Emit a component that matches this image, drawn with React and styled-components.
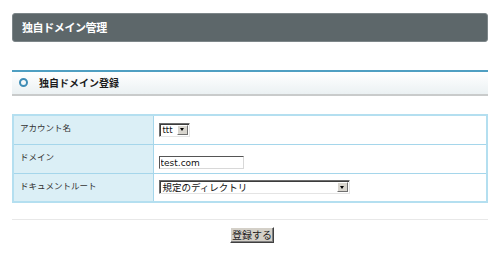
import React from 'react'
import styled, { createGlobalStyle } from 'styled-components'

const GlobalStyle = createGlobalStyle`
    body {
        margin: 0;
        background: #fff;
        font-family: "Noto Sans CJK JP", "DejaVu Sans", sans-serif;
    }
`

const Page = styled.main`
    box-sizing: border-box;
    width: 500px;
    padding: 13px 12px 0 12px;
    display: flex;
    flex-direction: column;
`

const TitleBar = styled.h1`
    box-sizing: border-box;
    margin: 0;
    height: 29px;
    display: flex;
    align-items: center;
    padding: 0 0 1px 9px;
    background: #5d676a;
    border: 1px solid #7d8689;
    border-radius: 3px;
    color: #fff;
    font-size: 11px;
    font-weight: bold;
    letter-spacing: -0.4px;
`

const SectionHead = styled.h2`
    box-sizing: border-box;
    margin: 28px 0 0 0;
    height: 26px;
    display: flex;
    align-items: center;
    gap: 11px;
    padding: 0 0 1px 7px;
    background: linear-gradient(#ffffff, #ebf1f3);
    border-top: 2px solid #4f9fc2;
    border-bottom: 2px solid #c9cbcb;
    color: #1c1c1c;
    font-size: 10px;
    font-weight: bold;
`

const Ring = styled.span`
    box-sizing: border-box;
    width: 9px;
    height: 9px;
    border-radius: 50%;
    border: 2px solid #3f8db6;
`

const FormTable = styled.table`
    margin-top: 18px;
    width: 100%;
    border-collapse: collapse;
    border: 2px solid #b4dff0;
`

const Row = styled.tr`
    height: 29px;
`

const Label = styled.th`
    box-sizing: border-box;
    width: 140px;
    padding: 0 0 5px 6px;
    text-align: left;
    font-weight: normal;
    font-size: 8.5px;
    color: #333;
    background: #dbeff6;
    border: 1px solid #a5d6eb;
`

const Cell = styled.td`
    padding: 0 0 0 5px;
    border: 1px solid #a5d6eb;
    background: #fff;
`

const SelectBox = styled.div`
    box-sizing: border-box;
    width: ${p => p.w}px;
    height: ${p => p.h}px;
    display: flex;
    align-items: stretch;
    background: #fff;
    border-top: 1px solid #6e6e6e;
    border-left: 1px solid #6e6e6e;
    border-right: 1px solid #e4e4e4;
    border-bottom: 1px solid #e4e4e4;
    box-shadow: inset 1px 1px 0 #3c3c3c;
`

const SelectText = styled.span`
    flex: 1;
    display: flex;
    align-items: center;
    padding-left: ${p => p.pad}px;
    font-size: ${p => p.size}px;
    font-family: ${p => p.jp ? '"Noto Sans CJK JP", sans-serif' : '"DejaVu Sans", sans-serif'};
    color: #111;
    white-space: nowrap;
    overflow: hidden;
`

const ArrowBtn = styled.span`
    box-sizing: border-box;
    width: 11px;
    margin: 1px 1px 1px 0;
    display: flex;
    align-items: center;
    justify-content: center;
    background: #d8d5ce;
    border-top: 1px solid #fff;
    border-left: 1px solid #fff;
    border-right: 1px solid #707070;
    border-bottom: 1px solid #707070;

    &::after {
        content: '';
        border-left: 2.5px solid transparent;
        border-right: 2.5px solid transparent;
        border-top: 3px solid #000;
    }
`

const TextInput = styled.input`
    box-sizing: border-box;
    width: 85px;
    height: 13px;
    margin: 0;
    padding: 0 0 0 1px;
    font-family: "DejaVu Sans", sans-serif;
    font-size: 9px;
    color: #111;
    background: #fff;
    border-top: 1px solid #555;
    border-left: 1px solid #555;
    border-right: 1px solid #d8d8d8;
    border-bottom: 1px solid #d8d8d8;
    outline: none;
`

const Divider = styled.hr`
    margin: 16px 0 0 0;
    border: none;
    border-top: 1px solid #e8e8e8;
`

const Actions = styled.div`
    display: flex;
    justify-content: center;
    padding: 7px 0 0 0;
`

const Submit = styled.button`
    box-sizing: border-box;
    width: 44px;
    height: 16px;
    margin: 0 0 0 4px;
    padding: 0 0 1px 0;
    font-family: "Noto Sans CJK JP", sans-serif;
    font-size: 10px;
    line-height: 1;
    color: #222;
    background: #d4d0c8;
    border-top: 1px solid #fff;
    border-left: 1px solid #fff;
    border-right: 1px solid #404040;
    border-bottom: 1px solid #404040;
    box-shadow: inset -1px -1px 0 #808080;
`

export default function App() {
    return (
        <Page>
            <GlobalStyle />
            <TitleBar>独自ドメイン管理</TitleBar>
            <SectionHead>
                <Ring />
                独自ドメイン登録
            </SectionHead>
            <FormTable>
                <tbody>
                    <Row>
                        <Label>アカウント名</Label>
                        <Cell>
                            <SelectBox w={31} h={14}>
                                <SelectText pad={3} size={8.5}>ttt</SelectText>
                                <ArrowBtn />
                            </SelectBox>
                        </Cell>
                    </Row>
                    <Row>
                        <Label>ドメイン</Label>
                        <Cell>
                            <TextInput type="text" defaultValue="test.com" readOnly />
                        </Cell>
                    </Row>
                    <Row>
                        <Label>ドキュメントルート</Label>
                        <Cell>
                            <SelectBox w={191} h={14}>
                                <SelectText pad={3} size={9.5} jp>規定のディレクトリ</SelectText>
                                <ArrowBtn />
                            </SelectBox>
                        </Cell>
                    </Row>
                </tbody>
            </FormTable>
            <Divider />
            <Actions>
                <Submit type="button">登録する</Submit>
            </Actions>
        </Page>
    )
}
